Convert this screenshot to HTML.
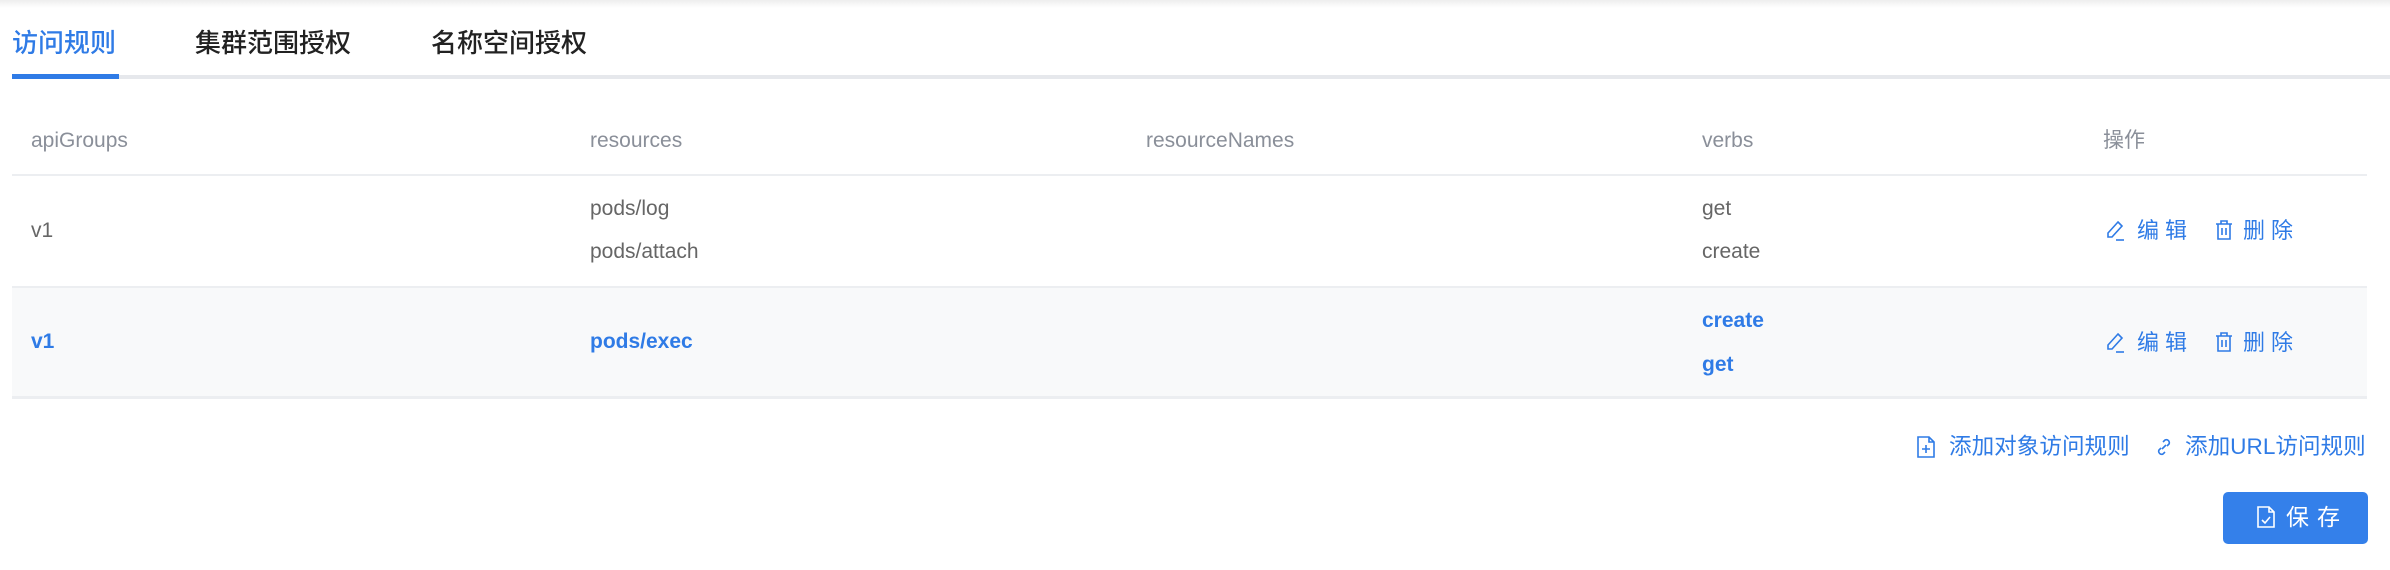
<!DOCTYPE html>
<html><head><meta charset="utf-8"><style>
*{margin:0;padding:0;box-sizing:border-box}
body{width:2390px;height:570px;background:#fff;position:relative;overflow:hidden;font-family:"Liberation Sans","Noto Sans CJK SC",sans-serif;color:#666}
.a{position:absolute;white-space:nowrap;line-height:1}
.tab{font-size:26px;color:#222;top:30px;font-weight:500}
.th{font-size:21px;color:#8a8f99;top:130px}
.td{font-size:21px;color:#666}
.b{color:#2f7be6;font-weight:bold}
.blue{color:#2f7be6}
.op{font-size:22px;color:#2f7be6;letter-spacing:6px}
svg{position:absolute}
</style></head><body>
<div class="a" style="left:0;top:0;width:2390px;height:8px;background:linear-gradient(#eee,#fff)"></div>
<div class="a tab" style="left:12px;color:#2f7be6">访问规则</div>
<div class="a tab" style="left:195px">集群范围授权</div>
<div class="a tab" style="left:431px">名称空间授权</div>
<div class="a" style="left:12px;top:75px;width:2378px;height:4px;background:#e6e8ec"></div>
<div class="a" style="left:12px;top:74px;width:107px;height:5px;background:#2f7be6"></div>

<div class="a th" style="left:31px">apiGroups</div>
<div class="a th" style="left:590px">resources</div>
<div class="a th" style="left:1146px">resourceNames</div>
<div class="a th" style="left:1702px">verbs</div>
<div class="a th" style="left:2103px">操作</div>
<div class="a" style="left:12px;top:174px;width:2355px;height:2px;background:#eceef1"></div>

<div class="a td" style="left:31px;top:220px">v1</div>
<div class="a td" style="left:590px;top:198px">pods/log</div>
<div class="a td" style="left:590px;top:241px">pods/attach</div>
<div class="a td" style="left:1702px;top:198px">get</div>
<div class="a td" style="left:1702px;top:241px">create</div>

<div class="a" style="left:12px;top:286px;width:2355px;height:113px;background:#f8f9fa;border-top:2px solid #eceef1;border-bottom:3px solid #eceef1"></div>
<div class="a td b" style="left:31px;top:331px">v1</div>
<div class="a td b" style="left:590px;top:331px">pods/exec</div>
<div class="a td b" style="left:1702px;top:310px">create</div>
<div class="a td b" style="left:1702px;top:354px">get</div>

<svg style="left:2104px;top:219px" width="22" height="22" viewBox="0 0 22 22" fill="none" stroke="#2f7be6" stroke-width="1.6"><path d="M14 3l4 4-10 11H4v-4z"/><path d="M12 21h8"/></svg>
<div class="a op" style="left:2137px;top:220px">编辑</div>
<svg style="left:2213px;top:219px" width="22" height="22" viewBox="0 0 22 22" fill="none" stroke="#2f7be6" stroke-width="1.6"><path d="M3 5h16M8 5V2h6v3M5 5v15h12V5M9 9v7M13 9v7"/></svg>
<div class="a op" style="left:2243px;top:220px">删除</div>
<svg style="left:2104px;top:331px" width="22" height="22" viewBox="0 0 22 22" fill="none" stroke="#2f7be6" stroke-width="1.6"><path d="M14 3l4 4-10 11H4v-4z"/><path d="M12 21h8"/></svg>
<div class="a op" style="left:2137px;top:332px">编辑</div>
<svg style="left:2213px;top:331px" width="22" height="22" viewBox="0 0 22 22" fill="none" stroke="#2f7be6" stroke-width="1.6"><path d="M3 5h16M8 5V2h6v3M5 5v15h12V5M9 9v7M13 9v7"/></svg>
<div class="a op" style="left:2243px;top:332px">删除</div>

<svg style="left:1916px;top:435px" width="20" height="24" viewBox="0 0 20 24" fill="none" stroke="#2f7be6" stroke-width="1.6"><path d="M2 2h11l5 5v15H2z M13 2v5h5 M10 10v8 M6 14h8"/></svg>
<div class="a blue" style="left:1949px;top:436px;font-size:22.6px">添加对象访问规则</div>
<svg style="left:2154px;top:437px" width="20" height="20" viewBox="0 0 20 20" fill="none" stroke="#2f7be6" stroke-width="1.6"><path d="M8 12l4-4 M9 5l2-2a3 3 0 014 4l-2 2 M11 15l-2 2a3 3 0 01-4-4l2-2"/></svg>
<div class="a blue" style="left:2185px;top:436px;font-size:22.6px">添加URL访问规则</div>

<div class="a" style="left:2223px;top:492px;width:145px;height:52px;background:#3480ea;border-radius:5px"></div>
<svg style="left:2256px;top:505px" width="20" height="24" viewBox="0 0 20 24" fill="none" stroke="#fff" stroke-width="1.6"><path d="M2 2h11l5 5v15H2z M13 2v5h5 M6 15l3 3 5-6"/></svg>
<div class="a" style="left:2286px;top:506px;font-size:23px;color:#fff;letter-spacing:8px">保存</div>
</body></html>
